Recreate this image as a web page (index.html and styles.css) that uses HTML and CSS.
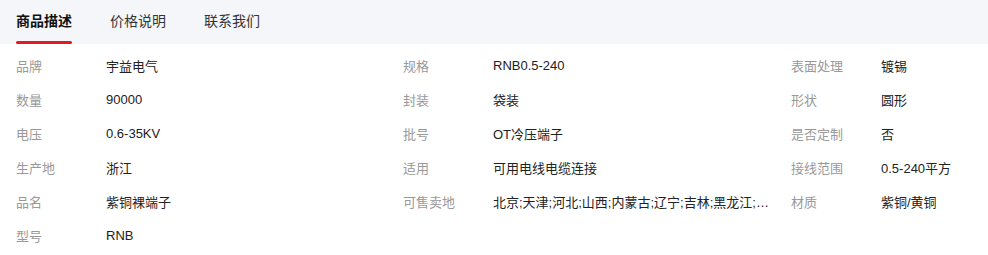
FILE: index.html
```html
<!DOCTYPE html>
<html lang="zh">
<head>
    <meta charset="UTF-8" />
    <meta name="viewport" content="width=device-width, initial-scale=1.0" />
    <title>商品详情</title>
    <link rel="stylesheet" href="styles.css">
</head>
<body>
    <div class="tabs">
        <div class="tab active">商品描述</div>
        <div class="tab">价格说明</div>
        <div class="tab">联系我们</div>
    </div>

    <div class="attrs">
        <div class="attr"><span class="attr-name">品牌</span><span class="attr-value">宇益电气</span></div>
        <div class="attr"><span class="attr-name">规格</span><span class="attr-value">RNB0.5-240</span></div>
        <div class="attr"><span class="attr-name">表面处理</span><span class="attr-value">镀锡</span></div>

        <div class="attr"><span class="attr-name">数量</span><span class="attr-value">90000</span></div>
        <div class="attr"><span class="attr-name">封装</span><span class="attr-value">袋装</span></div>
        <div class="attr"><span class="attr-name">形状</span><span class="attr-value">圆形</span></div>

        <div class="attr"><span class="attr-name">电压</span><span class="attr-value">0.6-35KV</span></div>
        <div class="attr"><span class="attr-name">批号</span><span class="attr-value">OT冷压端子</span></div>
        <div class="attr"><span class="attr-name">是否定制</span><span class="attr-value">否</span></div>

        <div class="attr"><span class="attr-name">生产地</span><span class="attr-value">浙江</span></div>
        <div class="attr"><span class="attr-name">适用</span><span class="attr-value">可用电线电缆连接</span></div>
        <div class="attr"><span class="attr-name">接线范围</span><span class="attr-value">0.5-240平方</span></div>

        <div class="attr"><span class="attr-name">品名</span><span class="attr-value">紫铜裸端子</span></div>
        <div class="attr"><span class="attr-name">可售卖地</span><span class="attr-value">北京;天津;河北;山西;内蒙古;辽宁;吉林;黑龙江;上海;江苏;浙江;安徽</span></div>
        <div class="attr"><span class="attr-name">材质</span><span class="attr-value">紫铜/黄铜</span></div>

        <div class="attr"><span class="attr-name">型号</span><span class="attr-value">RNB</span></div>
    </div>
</body>
</html>
```

FILE: styles.css
```css
body {
    margin: 0;
    padding: 0;
    background: #fff;
    font-family: "Liberation Sans", "Noto Sans CJK SC", sans-serif;
    overflow: hidden;
}

.tabs {
    display: flex;
    height: 44px;
    padding-left: 16px;
    gap: 38px;
    background: #f5f6f9;
}

.tab {
    position: relative;
    font-size: 14px;
    line-height: 43px;
    color: #333;
}

.tab.active {
    font-weight: bold;
    color: #111;
}

.tab.active::after {
    content: "";
    position: absolute;
    left: 0;
    right: 0;
    bottom: 0;
    height: 3px;
    border-radius: 2px;
    background: #e5191f;
}

.attrs {
    display: grid;
    grid-template-columns: 387px 388px 1fr;
    padding: 4px 0 0 16px;
}

.attr {
    display: flex;
    height: 34px;
    align-items: center;
    font-size: 13px;
    min-width: 0;
}

.attr-name {
    width: 90px;
    flex-shrink: 0;
    color: #999;
}

.attr-value {
    max-width: 278px;
    color: #222;
    white-space: nowrap;
    overflow: hidden;
    text-overflow: ellipsis;
}
```
